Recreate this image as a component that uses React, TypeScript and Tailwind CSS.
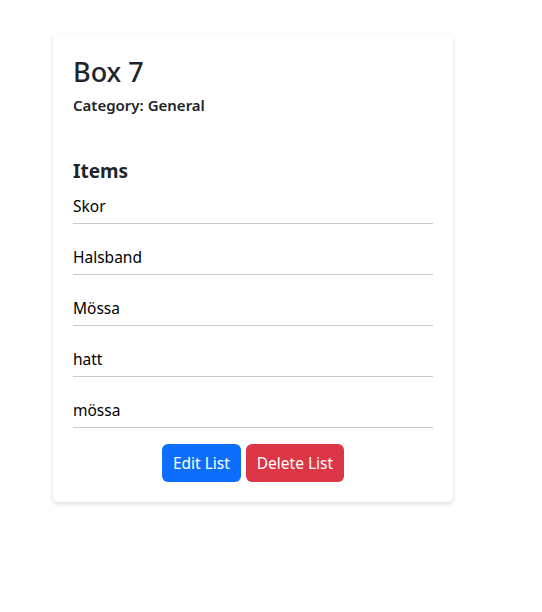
import React from "react";

const items = ["Skor", "Halsband", "Mössa", "hatt", "mössa"];

export default function App() {
  return (
    <div
      className="min-h-[612px] w-full bg-white text-[#212529]"
      style={{ fontFamily: '"Segoe UI", "Noto Sans", "Open Sans", sans-serif' }}
    >
      <div className="pl-[53px] pt-[34px]">
        <div className="w-[400px] rounded-[6px] bg-white px-5 pt-[22px] pb-5 shadow-[0_2px_5px_rgba(0,0,0,0.14)]">
          <h2 className="text-[27px] font-medium leading-[1.2] mb-[5px]">Box 7</h2>
          <p className="text-[15px] font-semibold leading-6">Category: General</p>
          <h5 className="mt-[42px] text-[19px] font-bold leading-6">Items</h5>
          <ul className="mt-[3px] flex flex-col gap-[13px]">
            {items.map((it) => (
              <li
                key={it}
                className="border-b border-[#cccccc] pt-2 pb-[5px] text-[15.5px] leading-6 text-black"
              >
                {it}
              </li>
            ))}
          </ul>
          <div className="mt-4 flex justify-center gap-[5px]">
            <button className="h-[38px] rounded-[6px] bg-[#0d6efd] px-[11px] text-[15.5px] leading-6 text-white">
              Edit List
            </button>
            <button className="h-[38px] rounded-[6px] bg-[#dc3545] px-[11px] text-[15.5px] leading-6 text-white">
              Delete List
            </button>
          </div>
        </div>
      </div>
    </div>
  );
}
